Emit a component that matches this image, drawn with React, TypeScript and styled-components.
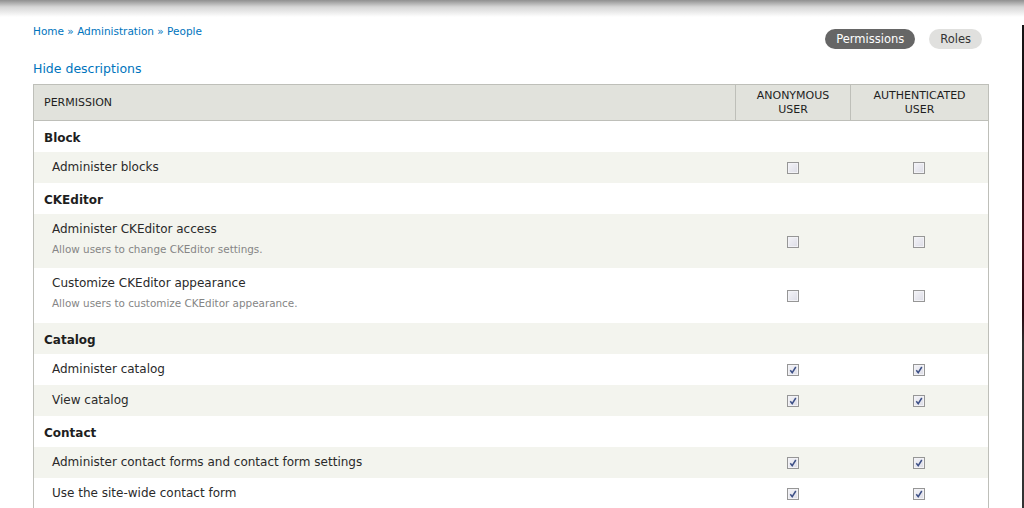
import React from 'react';
import styled, { createGlobalStyle } from 'styled-components';

const GlobalStyle = createGlobalStyle`
  html, body {
    margin: 0;
    padding: 0;
    background: #fff;
  }
  body {
    font-family: 'DejaVu Sans', 'Lucida Grande', Verdana, sans-serif;
    color: #333;
  }
`;

const Page = styled.div`
  background: linear-gradient(#8f8f8f 0px, #d6d6d6 7px, #fff 17px) no-repeat;
  display: flex;
  height: 508px;
  overflow: hidden;
  width: 1024px;
`;

const Main = styled.div`
  box-sizing: border-box;
  flex: 1;
  padding: 24px 33px 0 33px;
`;

const EdgeStrip = styled.div`
  background: linear-gradient(
    #151515 0%,
    #1a0c10 20%,
    #3a0d17 45%,
    #2a0a12 60%,
    #2e2e2e 66%,
    #333 100%
  );
  margin-top: 25px;
  width: 3px;
`;

const TopRow = styled.div`
  align-items: flex-start;
  display: flex;
  justify-content: space-between;
`;

const Breadcrumb = styled.nav`
  color: #0074bd;
  font-size: 10.5px;
  line-height: 14px;

  a {
    color: #0074bd;
    text-decoration: none;
  }
`;

const Tabs = styled.ul`
  display: flex;
  gap: 14px;
  list-style: none;
  margin: 5px 7px 0 0;
  padding: 0;
`;

const Tab = styled.li<{ $active?: boolean }>`
  background: ${(p) => (p.$active ? '#666' : '#e0e0de')};
  border-radius: 10px;
  color: ${(p) => (p.$active ? '#fff' : '#333')};
  font-size: 11.5px;
  height: 20px;
  line-height: 20px;
  padding: 0 11px;
`;

const ToggleLink = styled.a`
  color: #0074bd;
  display: block;
  font-size: 12.5px;
  line-height: 16px;
  margin: 12px 0 7px;
  text-decoration: none;
`;

const Table = styled.table`
  border: 1px solid #bebfb9;
  border-collapse: collapse;
  table-layout: fixed;
  width: 955px;
`;

const HeadCell = styled.th<{ $center?: boolean }>`
  background: #e1e2dc;
  border: 1px solid #bebfb9;
  box-sizing: border-box;
  color: #1e1e1e;
  font-size: 11px;
  font-weight: normal;
  height: 36px;
  line-height: 14px;
  padding: 0 10px;
  text-align: ${(p) => (p.$center ? 'center' : 'left')};
  text-transform: uppercase;
`;

const Row = styled.tr<{ $striped?: boolean }>`
  background: ${(p) => (p.$striped ? '#f3f4ee' : '#fff')};
`;

const Cell = styled.td<{ $tall?: boolean }>`
  box-sizing: border-box;
  height: ${(p) => (p.$tall ? '54.5px' : '31px')};
  padding: ${(p) => (p.$tall ? '7px 10px 0' : '0 10px')};
  vertical-align: ${(p) => (p.$tall ? 'top' : 'middle')};
`;

const CheckCell = styled.td`
  box-sizing: border-box;
  padding: 0;
  text-align: center;
  vertical-align: middle;
`;

const ModuleName = styled.span`
  color: #1e1e1e;
  font-size: 12px;
  font-weight: bold;
`;

const PermTitle = styled.div`
  color: #2a2a2a;
  font-size: 12px;
  line-height: 16px;
  margin-left: 8px;
`;

const PermDesc = styled.div`
  color: #858585;
  font-size: 10.4px;
  line-height: 14px;
  margin: 5px 0 0 8px;
`;

const Box = styled.span`
  background: linear-gradient(135deg, #f4f4f8 0%, #dcdce6 100%);
  border: 1px solid #969696;
  box-shadow: inset 0 0 0 1px #f2f2f6;
  box-sizing: border-box;
  display: inline-block;
  height: 12px;
  vertical-align: middle;
  width: 12px;

  svg {
    display: block;
    height: 10px;
    width: 10px;
  }
`;

const Checkbox: React.FC<{ checked?: boolean }> = ({ checked }) => (
  <Box>
    {checked && (
      <svg viewBox="0 0 10 10">
        <path d="M2.3 5.2 L4.2 7.6 L7.8 2" fill="none" stroke="#3c4f86" strokeWidth="1.5" />
      </svg>
    )}
  </Box>
);

type Perm = { title: string; desc?: string; anon: boolean; auth: boolean };
type Module = { name: string; perms: Perm[] };

const modules: Module[] = [
  { name: 'Block', perms: [{ title: 'Administer blocks', anon: false, auth: false }] },
  {
    name: 'CKEditor',
    perms: [
      {
        title: 'Administer CKEditor access',
        desc: 'Allow users to change CKEditor settings.',
        anon: false,
        auth: false,
      },
      {
        title: 'Customize CKEditor appearance',
        desc: 'Allow users to customize CKEditor appearance.',
        anon: false,
        auth: false,
      },
    ],
  },
  {
    name: 'Catalog',
    perms: [
      { title: 'Administer catalog', anon: true, auth: true },
      { title: 'View catalog', anon: true, auth: true },
    ],
  },
  {
    name: 'Contact',
    perms: [
      { title: 'Administer contact forms and contact form settings', anon: true, auth: true },
      { title: 'Use the site-wide contact form', anon: true, auth: true },
    ],
  },
];

const App: React.FunctionComponent = () => {
  let i = 0;
  const rows: React.ReactNode[] = [];
  modules.forEach((m) => {
    rows.push(
      <Row key={m.name} $striped={i++ % 2 === 1}>
        <Cell colSpan={3}>
          <ModuleName>{m.name}</ModuleName>
        </Cell>
      </Row>
    );
    m.perms.forEach((p) => {
      rows.push(
        <Row key={p.title} $striped={i++ % 2 === 1}>
          <Cell $tall={!!p.desc}>
            <PermTitle>{p.title}</PermTitle>
            {p.desc && <PermDesc>{p.desc}</PermDesc>}
          </Cell>
          <CheckCell>
            <Checkbox checked={p.anon} />
          </CheckCell>
          <CheckCell>
            <Checkbox checked={p.auth} />
          </CheckCell>
        </Row>
      );
    });
  });

  return (
    <>
      <GlobalStyle />
      <Page>
        <Main>
          <TopRow>
            <Breadcrumb>
              <a href="#">Home</a> » <a href="#">Administration</a> » <a href="#">People</a>
            </Breadcrumb>
            <Tabs>
              <Tab $active>Permissions</Tab>
              <Tab>Roles</Tab>
            </Tabs>
          </TopRow>
          <ToggleLink href="#">Hide descriptions</ToggleLink>
          <Table>
            <colgroup>
              <col style={{ width: 702 }} />
              <col style={{ width: 115 }} />
              <col style={{ width: 138 }} />
            </colgroup>
            <thead>
              <tr>
                <HeadCell>Permission</HeadCell>
                <HeadCell $center>
                  Anonymous
                  <br />
                  user
                </HeadCell>
                <HeadCell $center>
                  Authenticated
                  <br />
                  user
                </HeadCell>
              </tr>
            </thead>
            <tbody>{rows}</tbody>
          </Table>
        </Main>
        <EdgeStrip />
      </Page>
    </>
  );
};

export default App;
